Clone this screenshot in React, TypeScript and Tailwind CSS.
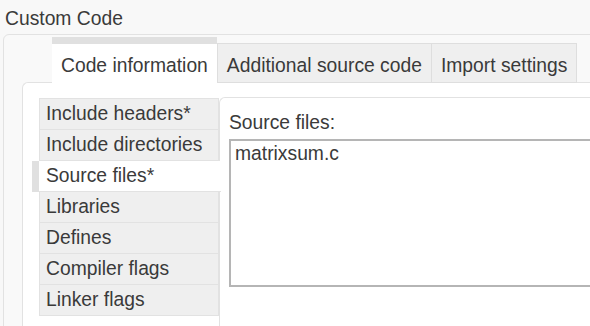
import React from 'react';

const groups = [
  'Include headers*',
  'Include directories',
  'Source files*',
  'Libraries',
  'Defines',
  'Compiler flags',
  'Linker flags',
];

const tabs = ['Code information', 'Additional source code', 'Import settings'];

export default function App() {
  const activeTab = 0;
  const selected = 2;

  return (
    <div className="w-[590px] h-[326px] overflow-hidden bg-[#f8f8f8] text-[19.3px] leading-[21px] text-[#3a3a3a] font-['Liberation_Sans',Arial,sans-serif]">
      {/* Title */}
      <div className="h-[34px] pl-[5px] pt-[8px] whitespace-nowrap">Custom Code</div>

      {/* Outer group box */}
      <div className="ml-[3px] w-[640px] h-[400px] border border-[#e2e2e2] rounded-tl-[6px] bg-[#f9f9f9] pt-[2px]">
        {/* Tab strip */}
        <div className="relative z-10 -mb-px flex items-end pl-[48px]">
          {tabs.map((t, i) =>
            i === activeTab ? (
              <div
                key={t}
                className="h-[46px] border-t-[7px] border-[#e0e0e0] bg-white px-[9px] pt-[11px] whitespace-nowrap"
              >
                {t}
              </div>
            ) : (
              <div
                key={t}
                className={`h-[40px] border border-[#dedede] bg-[#efefef] px-[9px] pt-[11px] whitespace-nowrap ${i > 1 ? '-ml-px' : ''}`}
              >
                {t}
              </div>
            )
          )}
        </div>

        {/* Tab content */}
        <div className="ml-[18px] h-[320px] flex items-start border-l border-t border-[#e2e2e2] rounded-tl-[6px] bg-white">
          {/* Group list */}
          <div className="mt-[15px] ml-[9px] w-[187px] shrink-0 flex flex-col">
            {groups.map((g, i) =>
              i === selected ? (
                <div key={g} className="relative z-10 flex h-[31px] w-[189px]">
                  <div className="w-[7px] shrink-0 bg-[#e0e0e0]" />
                  <div className="flex-1 bg-white border-b border-[#e2e2e2] pl-[7px] pt-[4px] whitespace-nowrap">
                    {g}
                  </div>
                </div>
              ) : (
                <div key={g} className="flex">
                  <div className="w-[7px] shrink-0" />
                  <div
                    className={`w-[180px] h-[31px] border-x border-b border-[#e2e2e2] bg-[#efefef] pl-[6px] pt-[4px] whitespace-nowrap ${i === 0 ? 'border-t h-[32px]' : ''}`}
                  >
                    {g}
                  </div>
                </div>
              )
            )}
          </div>

          {/* Source files editor */}
          <div className="mt-[14px] h-[260px] w-[400px] shrink-0 border-l border-t border-[#e2e2e2] rounded-tl-[6px] bg-white pl-[9px] pt-[14px]">
            <div className="whitespace-nowrap">Source files:</div>
            <div className="mt-[6px] h-[148px] w-[380px] border-2 border-[#b5b5b5] bg-white pl-[4px] pt-[2px]">
              matrixsum.c
            </div>
          </div>
        </div>
      </div>
    </div>
  );
}
